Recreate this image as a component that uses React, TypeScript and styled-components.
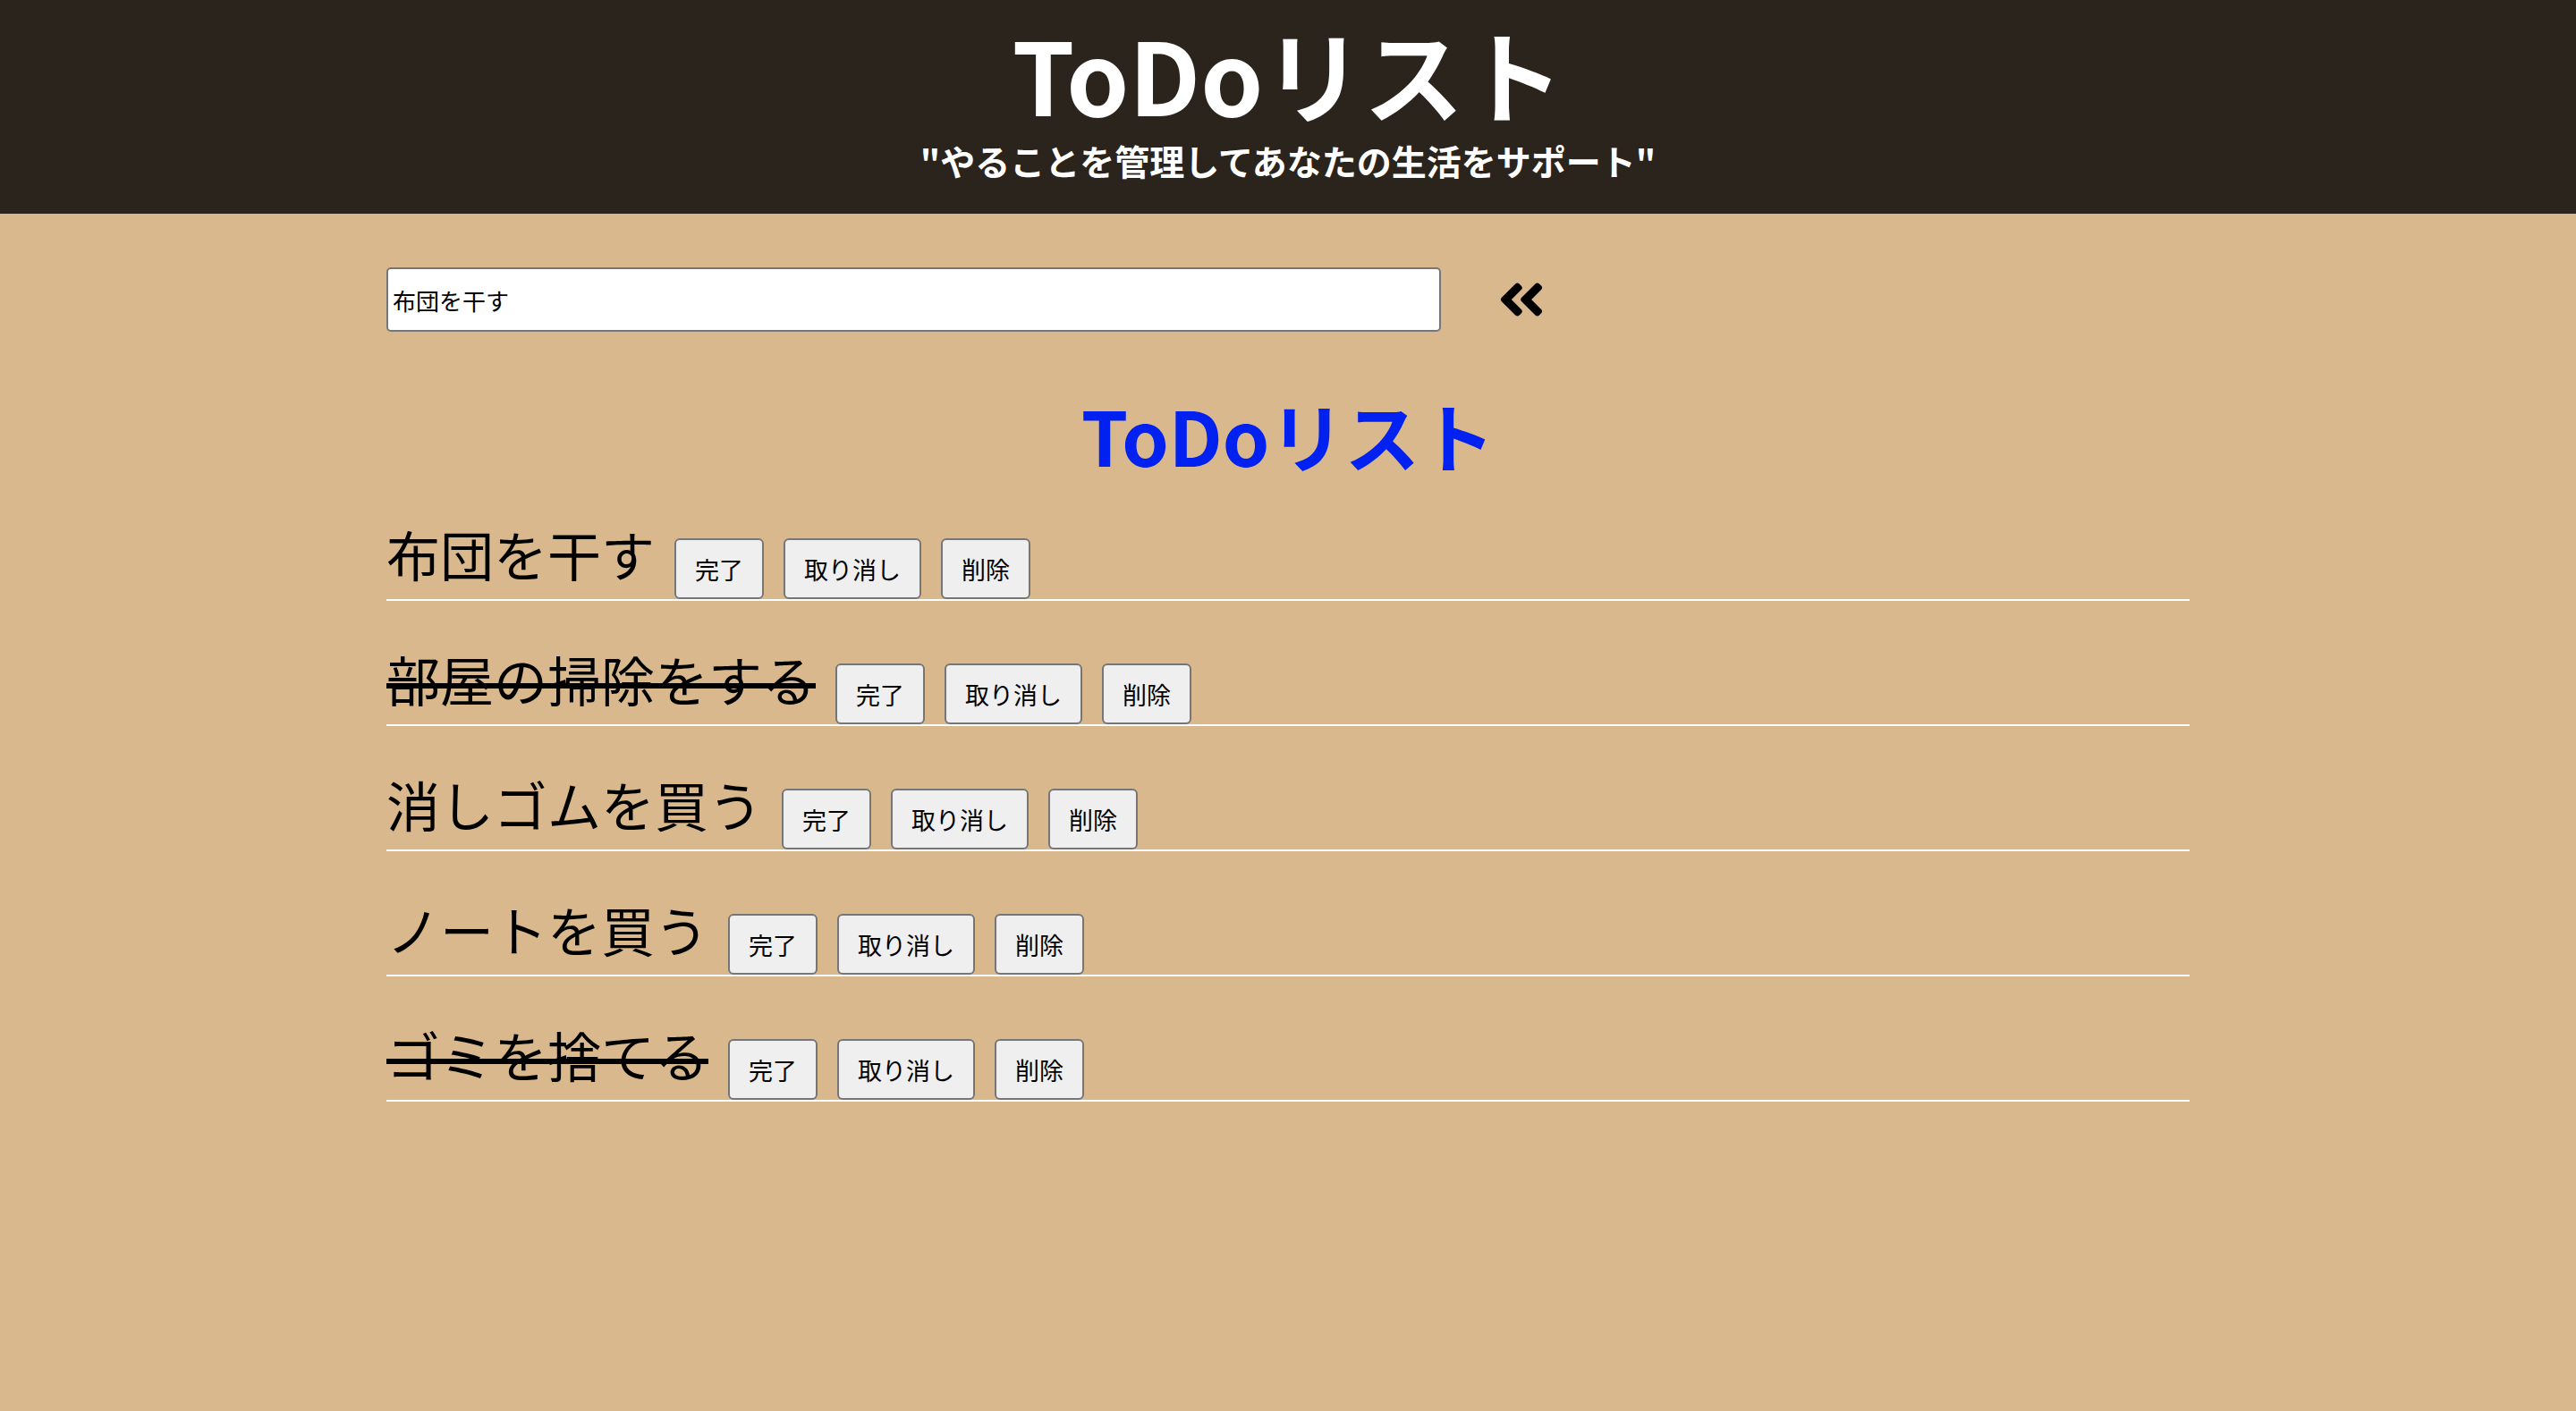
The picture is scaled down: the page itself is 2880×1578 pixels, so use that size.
import React from "react";
import styled, { createGlobalStyle } from "styled-components";

const Global = createGlobalStyle`
  html, body { margin: 0; padding: 0; }
  body {
    background: #d9b88d;
    font-family: "Noto Sans CJK JP", "Noto Sans", sans-serif;
    color: #000;
  }
`;

const Page = styled.div`
  min-height: 100vh;
  background: #d9b88d;
`;

const Header = styled.header`
  background: #2b241d;
  color: #fff;
  height: 239px;
  box-sizing: border-box;
  padding-top: 25px;
  display: flex;
  flex-direction: column;
  align-items: center;
`;

const HeaderTitle = styled.h1`
  margin: 0;
  font-size: 112px;
  line-height: 112px;
  font-weight: 700;
`;

const Subtitle = styled.p`
  margin: 23px 0 0;
  font-size: 39px;
  line-height: 39px;
  font-weight: 700;
`;

const Container = styled.main`
  width: 2016px;
  margin: 0 auto;
`;

const InputRow = styled.div`
  display: flex;
  align-items: center;
  gap: 64px;
  margin-top: 60px;
`;

const TextInput = styled.input`
  width: 1179px;
  height: 72px;
  box-sizing: border-box;
  border: 2px solid #767676;
  border-radius: 5px;
  background: #fff;
  padding: 0 5px;
  font-family: "Noto Sans CJK JP", sans-serif;
  font-size: 26px;
  color: #000;
  outline: none;
`;

const AddButton = styled.button`
  border: none;
  background: none;
  padding: 0;
  display: flex;
  align-items: center;
  cursor: pointer;
`;

const ListTitle = styled.h2`
  margin: 73px 0 0;
  text-align: center;
  color: #0021f0;
  font-size: 84px;
  line-height: 84px;
  font-weight: 700;
`;

const List = styled.ul`
  list-style: none;
  margin: 4px 0 0;
  padding: 0;
`;

const Item = styled.li`
  height: 140px;
  box-sizing: border-box;
  border-bottom: 2px solid #fff;
  display: flex;
  align-items: flex-end;
  gap: 22px;
`;

const ItemText = styled.span<{ $done?: boolean }>`
  font-size: 60px;
  line-height: 60px;
  margin-bottom: 21px;
  background-image: ${(p) =>
    p.$done ? "linear-gradient(#000, #000)" : "none"};
  background-repeat: no-repeat;
  background-position: 0 35px;
  background-size: 100% 6px;
`;

const ActionButton = styled.button`
  height: 68px;
  box-sizing: border-box;
  padding: 0 21px;
  border: 2px solid #767676;
  border-radius: 6px;
  background: #efefef;
  font-family: "Noto Sans CJK JP", sans-serif;
  font-size: 27px;
  color: #000;
  cursor: pointer;
`;

const DoubleLeft = () => (
  <svg width="52" height="60" viewBox="0 0 448 512" aria-hidden="true">
    <path
      fill="#000"
      d="M223.7 239l136-136c9.4-9.4 24.6-9.4 33.9 0l22.6 22.6c9.4 9.4 9.4 24.6 0 33.9L319.9 256l96.4 96.4c9.4 9.4 9.4 24.6 0 33.9L393.7 409c-9.4 9.4-24.6 9.4-33.9 0l-136-136c-9.5-9.4-9.5-24.6-.1-34zm-192 34l136 136c9.4 9.4 24.6 9.4 33.9 0l22.6-22.6c9.4-9.4 9.4-24.6 0-33.9L127.9 256l96.4-96.4c9.4-9.4 9.4-24.6 0-33.9L201.7 103c-9.4-9.4-24.6-9.4-33.9 0l-136 136c-9.5 9.4-9.5 24.6-.1 34z"
    />
  </svg>
);

const todos = [
  { text: "布団を干す", done: false },
  { text: "部屋の掃除をする", done: true },
  { text: "消しゴムを買う", done: false },
  { text: "ノートを買う", done: false },
  { text: "ゴミを捨てる", done: true },
];

export default function App() {
  return (
    <Page>
      <Global />
      <Header>
        <HeaderTitle>ToDoリスト</HeaderTitle>
        <Subtitle>"やることを管理してあなたの生活をサポート"</Subtitle>
      </Header>
      <Container>
        <InputRow>
          <TextInput defaultValue="布団を干す" />
          <AddButton aria-label="追加">
            <DoubleLeft />
          </AddButton>
        </InputRow>
        <ListTitle>ToDoリスト</ListTitle>
        <List>
          {todos.map((t) => (
            <Item key={t.text}>
              <ItemText $done={t.done}>{t.text}</ItemText>
              <ActionButton>完了</ActionButton>
              <ActionButton>取り消し</ActionButton>
              <ActionButton>削除</ActionButton>
            </Item>
          ))}
        </List>
      </Container>
    </Page>
  );
}
